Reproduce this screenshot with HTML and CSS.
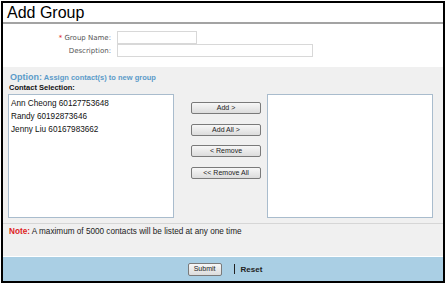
FILE: index.html
```html
<!DOCTYPE html>
<html>
<head>
<meta charset="utf-8">
<link rel="stylesheet" href="styles.css">
</head>
<body>
<div class="frame">
  <div class="title">Add Group</div>
  <div class="fields">
    <div class="field-row">
      <label class="label"><span class="req">*</span> Group Name:</label>
      <input class="input input-short" type="text">
    </div>
    <div class="field-row">
      <label class="label">Description:</label>
      <input class="input input-long" type="text">
    </div>
  </div>
  <div class="section">
    <div class="option"><span class="option-key">Option:</span> Assign contact(s) to new group</div>
    <div class="subhead">Contact Selection:</div>
    <div class="lists">
      <div class="listbox">
        <div class="item">Ann Cheong 60127753648</div>
        <div class="item">Randy 60192873646</div>
        <div class="item">Jenny Liu 60167983662</div>
      </div>
      <div class="buttons">
        <button class="btn">Add &gt;</button>
        <button class="btn">Add All &gt;</button>
        <button class="btn">&lt; Remove</button>
        <button class="btn">&lt;&lt; Remove All</button>
      </div>
      <div class="listbox"></div>
    </div>
    <div class="note"><span class="note-key">Note:</span> A maximum of 5000 contacts will be listed at any one time</div>
  </div>
  <div class="footer">
    <button class="btn submit">Submit</button>
    <span class="sep"></span>
    <span class="reset">Reset</span>
  </div>
</div>
</body>
</html>
```
FILE: styles.css
```css
html, body {
  margin: 0;
  padding: 0;
  background: #fff;
}
body {
  font-family: "Liberation Sans", Arial, sans-serif;
}
.frame {
  margin: 1px;
  height: 282px;
  box-sizing: border-box;
  border: 2px solid #000;
  display: flex;
  flex-direction: column;
  background: #fff;
}
.title {
  font-size: 16px;
  line-height: 18px;
  padding: 1px 0 0 4px;
  height: 18px;
  border-bottom: 2px solid #a3a3a3;
  color: #000;
}
.fields {
  height: 43px;
  padding-top: 7px;
  box-sizing: border-box;
  display: flex;
  flex-direction: column;
}
.field-row {
  display: flex;
  align-items: center;
  height: 13px;
}
.label {
  width: 108px;
  text-align: right;
  padding-right: 6px;
  font-family: "DejaVu Sans", Verdana, sans-serif;
  font-size: 7px;
  color: #555;
}
.req {
  color: #d22;
}
.input {
  height: 13px;
  box-sizing: border-box;
  border: 1px solid #d8d8d8;
  background: #fff;
  padding: 0;
  margin: 0;
}
.input-short { width: 80px; }
.input-long { width: 196px; }
.section {
  flex: 1;
  background: #f0f0f0;
  display: flex;
  flex-direction: column;
  padding-top: 5px;
}
.option {
  color: #5b9bc9;
  font-size: 7.5px;
  font-weight: bold;
  padding-left: 7px;
  line-height: 10px;
}
.option-key {
  font-size: 9px;
}
.subhead {
  font-size: 7.5px;
  font-weight: bold;
  padding-left: 6px;
  line-height: 10px;
  color: #111;
}
.lists {
  display: flex;
  padding: 1px 0 0 5px;
  height: 124px;
}
.listbox {
  width: 166px;
  height: 124px;
  box-sizing: border-box;
  border: 1px solid #a9bccd;
  background: #fff;
  padding: 3px 0 0 2px;
}
.item {
  font-size: 8.2px;
  line-height: 12.8px;
  color: #111;
}
.buttons {
  width: 93px;
  display: flex;
  flex-direction: column;
  align-items: flex-start;
  gap: 9.5px;
  padding: 8px 0 0 17px;
  box-sizing: border-box;
}
.btn {
  width: 70px;
  height: 12px;
  box-sizing: border-box;
  border: 1px solid #7a7a7a;
  border-radius: 2px;
  background: linear-gradient(#f7f7f7, #dcdcdc);
  font-family: "Liberation Sans", Arial, sans-serif;
  font-size: 7px;
  color: #222;
  padding: 0;
  line-height: 10px;
}
.note {
  margin-top: 5px;
  border-top: 1px solid #d6d6d6;
  padding: 3px 0 0 6px;
  font-size: 8.2px;
  color: #222;
}
.note-key {
  color: #d22;
  font-weight: bold;
}
.footer {
  height: 25px;
  box-sizing: border-box;
  border-top: 1px solid #fff;
  background: #aacfe4;
  display: flex;
  align-items: center;
  justify-content: center;
  padding-left: 4px;
}
.submit {
  width: 34px;
  height: 13px;
  font-size: 7px;
}
.sep {
  width: 1px;
  height: 10px;
  background: #222;
  margin: 0 6px 0 12px;
}
.reset {
  font-size: 8px;
  font-weight: bold;
  color: #222;
}
```
